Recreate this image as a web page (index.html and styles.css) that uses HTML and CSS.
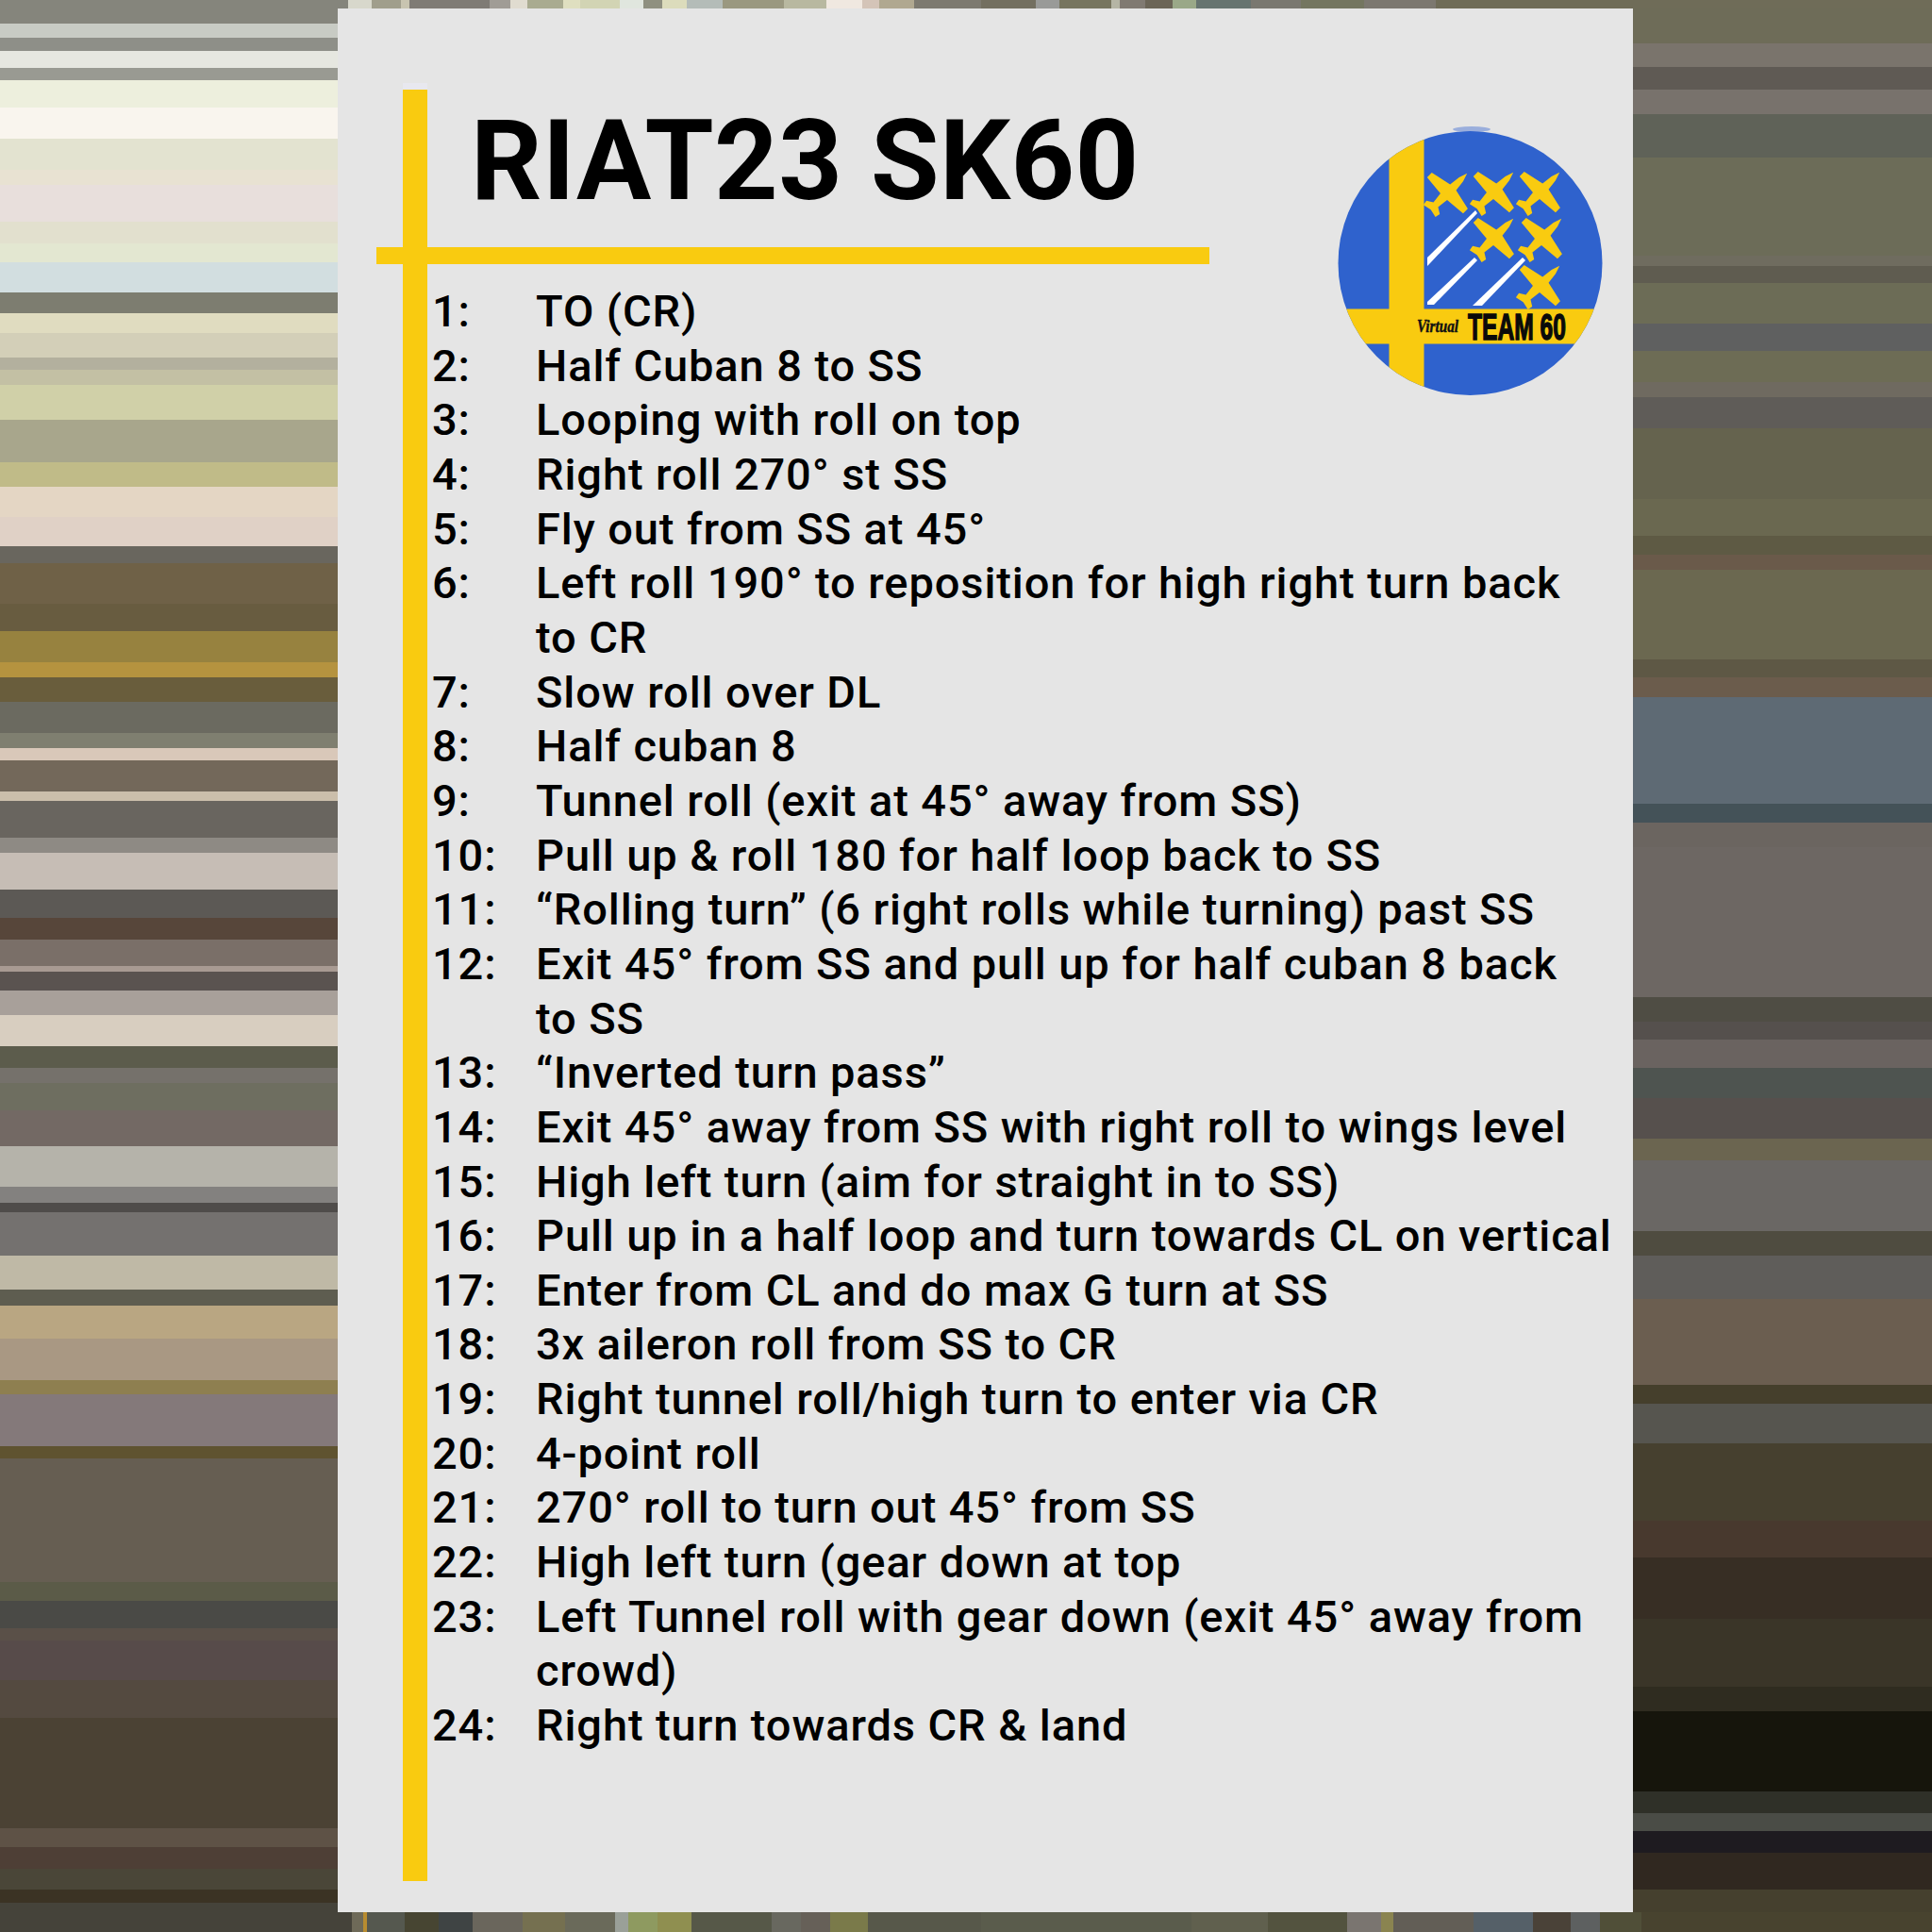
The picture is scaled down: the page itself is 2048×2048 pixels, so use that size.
FILE: index.html
```html
<!DOCTYPE html>
<html>
<head>
  <title>RIAT23 SK60</title>
  <link rel="stylesheet" href="styles.css">
</head>
<body>
  <div class="page">
    <div class="strip-top"></div>
    <div class="side-left"></div>
    <div class="card">
      <div class="bar-vertical"></div>
      <svg class="logo" viewBox="0 0 320 320" width="320" height="320">
        <defs>
          <clipPath id="disc"><circle cx="158.5" cy="159" r="140"/></clipPath>
          <path id="plane" d="M0 -30 L3 -21 L4.5 -9 L27 -4 L27 3 L5 5 L3.5 17 L10 21 L9 26.5 L0 24.5 L-9 26.5 L-10 21 L-3.5 17 L-5 5 L-27 3 L-27 -4 L-4.5 -9 L-3 -21 Z"/>
        </defs>
        <ellipse class="logo-smudge" cx="160" cy="17" rx="20" ry="3"/>
        <g clip-path="url(#disc)">
          <rect class="logo-blue" x="18" y="19" width="281" height="281"/>
          <rect class="logo-yellow" x="72.5" y="19" width="37" height="281"/>
          <rect class="logo-yellow" x="18" y="207.5" width="281" height="37"/>
        </g>
        <polygon class="logo-trail" points="164,103 166,106 115,160 113,162 113,153"/>
        <polygon class="logo-trail" points="163,153 166,156 120,203 113,203 113,200"/>
        <polygon class="logo-trail" points="214,153 217,156 171,204 161,204"/>
        <g class="logo-yellow">
          <use href="#plane" transform="translate(134 85) rotate(45)"/>
          <use href="#plane" transform="translate(183 84) rotate(45)"/>
          <use href="#plane" transform="translate(232 84) rotate(45)"/>
          <use href="#plane" transform="translate(183 133) rotate(45)"/>
          <use href="#plane" transform="translate(234 133) rotate(45)"/>
          <use href="#plane" transform="translate(232 183) rotate(45)"/>
        </g>
        <text class="logo-virtual" x="102" y="232" textLength="44" lengthAdjust="spacingAndGlyphs">Virtual</text>
        <text class="logo-team" x="156" y="240" textLength="104" lengthAdjust="spacingAndGlyphs">TEAM 60</text>
      </svg>
      <h1 class="title">RIAT23 SK60</h1>
      <div class="bar-horizontal"></div>
      <ol class="steps">
        <li><span class="num">1:</span><span class="txt">TO (CR)</span></li>
        <li><span class="num">2:</span><span class="txt">Half Cuban 8 to SS</span></li>
        <li><span class="num">3:</span><span class="txt">Looping with roll on top</span></li>
        <li><span class="num">4:</span><span class="txt">Right roll 270° st SS</span></li>
        <li><span class="num">5:</span><span class="txt">Fly out from SS at 45°</span></li>
        <li><span class="num">6:</span><span class="txt">Left roll 190° to reposition for high right turn back<br>to CR</span></li>
        <li><span class="num">7:</span><span class="txt">Slow roll over DL</span></li>
        <li><span class="num">8:</span><span class="txt">Half cuban 8</span></li>
        <li><span class="num">9:</span><span class="txt">Tunnel roll (exit at 45° away from SS)</span></li>
        <li><span class="num">10:</span><span class="txt">Pull up &amp; roll 180 for half loop back to SS</span></li>
        <li><span class="num">11:</span><span class="txt">“Rolling turn” (6 right rolls while turning) past SS</span></li>
        <li><span class="num">12:</span><span class="txt">Exit 45° from SS and pull up for half cuban 8 back<br>to SS</span></li>
        <li><span class="num">13:</span><span class="txt">“Inverted turn pass”</span></li>
        <li><span class="num">14:</span><span class="txt">Exit 45° away from SS with right roll to wings level</span></li>
        <li><span class="num">15:</span><span class="txt">High left turn (aim for straight in to SS)</span></li>
        <li><span class="num">16:</span><span class="txt">Pull up in a half loop and turn towards CL on vertical</span></li>
        <li><span class="num">17:</span><span class="txt">Enter from CL and do max G turn at SS</span></li>
        <li><span class="num">18:</span><span class="txt">3x aileron roll from SS to CR</span></li>
        <li><span class="num">19:</span><span class="txt">Right tunnel roll/high turn to enter via CR</span></li>
        <li><span class="num">20:</span><span class="txt">4-point roll</span></li>
        <li><span class="num">21:</span><span class="txt">270° roll to turn out 45° from SS</span></li>
        <li><span class="num">22:</span><span class="txt">High left turn (gear down at top</span></li>
        <li><span class="num">23:</span><span class="txt">Left Tunnel roll with gear down (exit 45° away from<br>crowd)</span></li>
        <li><span class="num">24:</span><span class="txt">Right turn towards CR &amp; land</span></li>
      </ol>
    </div>
    <div class="side-right"></div>
    <div class="strip-bottom"></div>
  </div>
</body>
</html>
```
FILE: styles.css
```css
body {
  margin: 0;
  font-family: Roboto, "Liberation Sans", sans-serif;
  color: #000;
}

.page {
  display: grid;
  grid-template-columns: 358px 1373px 317px;
  grid-template-rows: 9px 2018px 21px;
  width: 2048px;
  height: 2048px;
  background-color: #45433a;
}

/* backdrop bands, top to bottom / left to right */
.strip-top {
  grid-column: 1 / 4;
  background: linear-gradient(90deg,
    #85857c 0 369px, #d8d8cc 369px 394px, #a09e8c 394px 425px, #c8c4b0 425px 434px,
    #7f7b75 434px 519px, #a09c96 519px 541px, #e0dcd0 541px 559px, #a9ab90 559px 597px,
    #dfdfc0 597px 615px, #d2d4b4 615px 657px, #e0e6de 657px 682px, #8f9080 682px 702px,
    #dcdcbc 702px 728px, #b4bcb8 728px 766px, #9a9880 766px 831px, #b8b8a0 831px 876px,
    #f0e8e0 876px 914px, #d4c4b8 914px 932px, #b0a890 932px 969px, #7d7a70 969px 1040px,
    #736f60 1040px 1098px, #999a98 1098px 1123px, #77755f 1123px 1178px, #b5b5a5 1178px 1187px,
    #807a72 1187px 1214px, #6b6557 1214px 1243px, #9aa888 1243px 1268px, #677470 1268px 1326px,
    #7a7870 1326px 1379px, #747660 1379px 1446px, #7c7870 1446px 1522px, #6f6c58 1522px);
}

.side-left {
  background: linear-gradient(180deg,
    #85857c 0 16px, #c8cbc4 16px 31px, #8e8f88 31px 45px, #e6e7e0 45px 63px, #999a92 63px 76px,
    #edefdd 76px 105px, #f9f5ee 105px 138px, #e3e3d0 138px 171px, #e8e2d2 171px 187px,
    #e8dfdc 187px 226px, #e2e0ce 226px 249px, #e3e7d1 249px 269px, #d2dee0 269px 301px,
    #7d7d70 301px 323px, #e0dcc0 323px 344px, #d3cfb8 344px 370px, #b3b09e 370px 383px,
    #c3c0a4 383px 399px, #d0d0a8 399px 436px, #a8a68c 436px 481px, #c0bb88 481px 507px,
    #e4d6c4 507px 539px, #e0d1c6 539px 570px, #69665e 570px 588px, #6f6147 588px 631px,
    #685c40 631px 660px, #97823f 660px 693px, #b5933f 693px 709px, #695d3c 709px 735px,
    #6b6a60 735px 768px, #7f7f70 768px 784px, #d9c8b9 784px 797px, #73685a 797px 830px,
    #cbbeab 830px 840px, #69655f 840px 879px, #8e8a84 879px 895px, #c6bdb5 895px 934px,
    #5c5955 934px 964px, #57463a 964px 987px, #7a6f68 987px 1015px, #a89a92 1015px 1021px,
    #5a5350 1021px 1041px, #a8a09a 1041px 1067px, #d8cec0 1067px 1100px, #5c5c4c 1100px 1123px,
    #75716b 1123px 1139px, #6e6e60 1139px 1168px, #736964 1168px 1206px, #b5b3aa 1206px 1249px,
    #83817f 1249px 1266px, #4f4c4a 1266px 1276px, #74716f 1276px 1322px, #bfb9a6 1322px 1358px,
    #5e5d50 1358px 1375px, #b9a682 1375px 1410px, #a99883 1410px 1454px, #8e7f50 1454px 1469px,
    #84797a 1469px 1524px, #5f5330 1524px 1537px, #665e52 1537px 1668px, #5b5b48 1668px 1688px,
    #4a4a46 1688px 1717px, #5a5048 1717px 1730px, #574b4a 1730px 1772px, #544a40 1772px 1812px,
    #4b4234 1812px 1929px, #5e5246 1929px 1949px, #4e3f36 1949px 1972px, #4a4638 1972px 1994px,
    #3b3324 1994px 2008px, #45433a 2008px);
}

.side-right {
  background: linear-gradient(180deg,
    #6e6c58 0 37px, #7a746c 37px 62px, #5f5a54 62px 86px, #78726c 86px 112px, #5f6258 112px 158px,
    #6c6c58 158px 262px, #6f6c5f 262px 273px, #5f5c50 273px 291px, #6c6c56 291px 334px,
    #5f6060 334px 363px, #6d6c55 363px 396px, #6f6a60 396px 412px, #5f5c58 412px 445px,
    #65634e 445px 520px, #6a6850 520px 559px, #5e5a44 559px 579px, #6a5a4a 579px 595px,
    #6b6850 595px 690px, #5e5845 690px 709px, #6b5c4c 709px 730px, #5e6a74 730px 843px,
    #445258 843px 863px, #6b6560 863px 889px, #6d6763 889px 1048px, #4f4d44 1048px 1074px,
    #55504d 1074px 1093px, #6a6360 1093px 1123px, #4e5450 1123px 1155px, #56504d 1155px 1198px,
    #6b6550 1198px 1221px, #6a6764 1221px 1296px, #4f4c40 1296px 1322px, #5f5d5a 1322px 1368px,
    #6b5e50 1368px 1459px, #453f2c 1459px 1479px, #56554f 1479px 1521px, #46402f 1521px 1603px,
    #48392e 1603px 1642px, #372e24 1642px 1707px, #3a3528 1707px 1779px, #2f2c20 1779px 1805px,
    #16150c 1805px 1890px, #2f3028 1890px 1913px, #4a4c46 1913px 1932px, #1e1b20 1932px 1955px,
    #302820 1955px 1994px, #45402e 1994px);
}

.strip-bottom {
  grid-column: 1 / 4;
  background: linear-gradient(90deg,
    #45433a 0 373px, #6e6a58 373px 385px, #b88c30 385px 389px, #55584f 389px 429px,
    #474532 429px 465px, #3f4444 465px 501px, #6a665c 501px 554px, #757050 554px 599px,
    #6a6a5a 599px 652px, #9aa098 652px 666px, #8e9a60 666px 697px, #8f8f50 697px 733px,
    #565848 733px 818px, #68685f 818px 849px, #666058 849px 880px, #7a7a4a 880px 920px,
    #57584a 920px 1040px, #5a5c4c 1040px 1263px, #60604e 1263px 1344px, #53533f 1344px 1428px,
    #7a7570 1428px 1464px, #8a8450 1464px 1477px, #625e56 1477px 1562px, #556068 1562px 1625px,
    #4a4238 1625px 1665px, #5d6060 1665px 1696px, #504f38 1696px 1740px, #48432f 1740px);
}

.card {
  position: relative;
  background-color: #e5e5e5;
  padding: 112px 20px 0 41px;
  overflow: hidden;
}

.bar-vertical {
  position: absolute;
  left: 69px;
  top: 79px;
  width: 26px;
  height: 1899px;
  border-top: 7px solid #e8e8ef;
  background-color: #f9cb10;
}

.bar-horizontal {
  position: absolute;
  left: 41px;
  top: 253px;
  width: 883px;
  height: 18px;
  background-color: #f9cb10;
}

.logo {
  position: absolute;
  left: 1042px;
  top: 111px;
}

.logo-blue {
  fill: #2f62cd;
}

.logo-yellow {
  fill: #f9cb10;
}

.logo-trail {
  fill: #fff;
}

.logo-smudge {
  fill: #7a97d8;
  opacity: 0.7;
}

.logo-virtual {
  font-family: "Liberation Serif", serif;
  font-style: italic;
  font-weight: 700;
  font-size: 18px;
  fill: #111;
  stroke: #111;
  stroke-width: 0.4px;
}

.logo-team {
  font-family: "Liberation Sans", sans-serif;
  font-weight: 700;
  font-size: 39px;
  fill: #0a0a0a;
  stroke: #0a0a0a;
  stroke-width: 1.4px;
}

.title {
  position: relative;
  margin: 0 0 0 100px;
  font-size: 118px;
  line-height: 100px;
  font-weight: 700;
  letter-spacing: 0.4px;
}

.steps {
  position: relative;
  list-style: none;
  margin: 80px 0 0 59px;
  padding: 0;
  font-size: 47px;
  line-height: 57.65px;
  font-weight: 500;
  letter-spacing: 0.9px;
}

.steps li {
  display: flex;
}

.num {
  flex: 0 0 110px;
}

.txt {
  flex: 1;
  white-space: nowrap;
}
```
